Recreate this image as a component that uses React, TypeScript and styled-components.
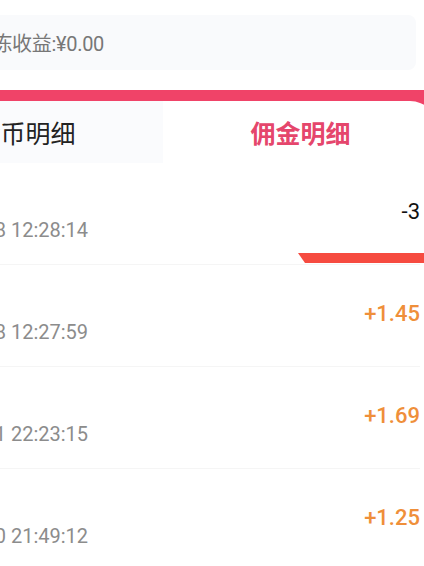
import React from 'react';
import styled, { createGlobalStyle } from 'styled-components';

const GlobalStyle = createGlobalStyle`
    html, body {
        margin: 0;
        padding: 0;
        background: #ffffff;
        overflow: hidden;
    }
    body {
        font-family: Roboto, 'Noto Sans CJK SC', sans-serif;
    }
`;

interface Record {
    title: string;
    time: string;
    amount: string;
    income: boolean;
}

const records: Record[] = [
    { title: '提现扣除', time: '2024-06-28 12:28:14', amount: '-3', income: false },
    { title: '推广佣金', time: '2024-06-28 12:27:59', amount: '+1.45', income: true },
    { title: '推广佣金', time: '2024-06-21 22:23:15', amount: '+1.69', income: true },
    { title: '推广佣金', time: '2024-06-20 21:49:12', amount: '+1.25', income: true },
];

const Screen = styled.div`
    position: relative;
    width: 550px;
    margin-left: -112px;
    padding-top: 15px;
`;

const SummaryCard = styled.div`
    display: flex;
    align-items: center;
    height: 55px;
    margin: 0 22px 0 16px;
    padding-left: 49px;
    background: #f9fafc;
    border-radius: 8px;
`;

const SummaryText = styled.span`
    font-size: 20px;
    letter-spacing: -0.3px;
    color: #777777;
`;

const TabsCard = styled.div`
    margin-top: 20px;
    padding-top: 11px;
    background: #f04368;
`;

const TabBar = styled.div`
    display: flex;
`;

const Tab = styled.div<{ active?: boolean }>`
    flex: 1;
    display: flex;
    align-items: center;
    justify-content: center;
    height: 62px;
    font-family: 'Noto Sans CJK SC', sans-serif;
    font-size: 25px;
    font-weight: ${p => (p.active ? 700 : 400)};
    color: ${p => (p.active ? '#e5466c' : '#222222')};
    background: ${p => (p.active ? '#ffffff' : '#fafbfd')};
    border-top-right-radius: ${p => (p.active ? '28px' : '0')};
`;

const List = styled.div`
    padding: 0 18px 0 17px;
    background: #ffffff;
`;

const Row = styled.div`
    display: flex;
    align-items: center;
    justify-content: space-between;
    height: 101px;
    border-bottom: 1px solid #f5f5f5;
`;

const Info = styled.div`
    display: flex;
    flex-direction: column;
    gap: 7px;
`;

const Title = styled.span`
    font-size: 20px;
    line-height: 26px;
    color: #222222;
`;

const Time = styled.span`
    font-size: 20px;
    line-height: 26px;
    color: #8c8c8c;
`;

const Amount = styled.span<{ income: boolean }>`
    margin-top: -4px;
    font-size: 22px;
    font-weight: ${p => (p.income ? 500 : 400)};
    color: ${p => (p.income ? '#ef8f3a' : '#111111')};
`;

// bottom edge of the floating red tip that sits over the list
const FloatTip = styled.div`
    position: absolute;
    top: 253px;
    left: 410px;
    right: 0;
    height: 10px;
    background: #f64b40;
    clip-path: polygon(0 0, 100% 0, 100% 100%, 7px 100%);
`;

const App: React.FC = () => {
    return (
        <>
            <GlobalStyle />
            <Screen>
                <SummaryCard>
                    <SummaryText>待解冻收益:¥0.00</SummaryText>
                </SummaryCard>
                <TabsCard>
                    <TabBar>
                        <Tab>金币明细</Tab>
                        <Tab active>佣金明细</Tab>
                    </TabBar>
                    <List>
                        {records.map(r => (
                            <Row key={r.time}>
                                <Info>
                                    <Title>{r.title}</Title>
                                    <Time>{r.time}</Time>
                                </Info>
                                <Amount income={r.income}>{r.amount}</Amount>
                            </Row>
                        ))}
                    </List>
                </TabsCard>
                <FloatTip />
            </Screen>
        </>
    );
};

export default App;
